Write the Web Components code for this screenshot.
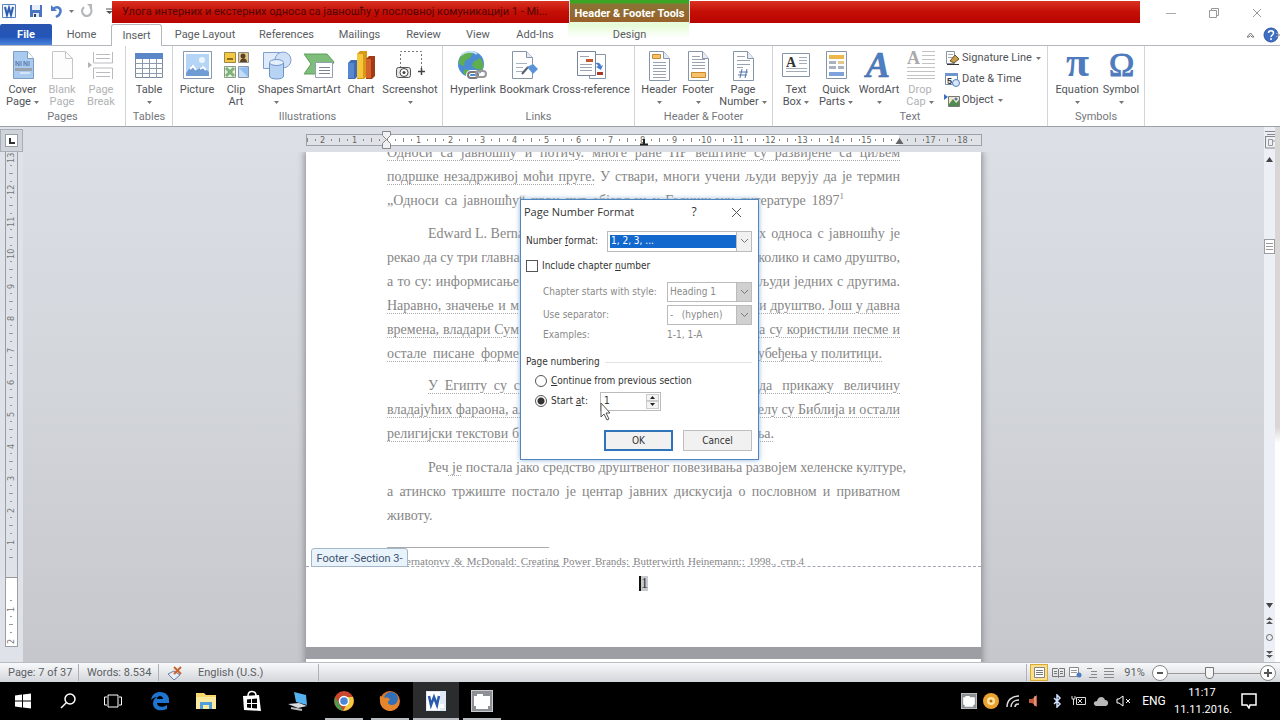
<!DOCTYPE html>
<html lang="en">
<head>
<meta charset="utf-8">
<title>Word - Page Number Format</title>
<style>
html,body{margin:0;height:100%}
body{--ui:Roboto,"Open Sans",sans-serif;--dlg:"DejaVu Sans Condensed","DejaVu Sans",sans-serif;--ink:#505358;--line:#b4b7bc;font:11px/12px var(--ui);color:var(--ink);background:#fff;overflow:hidden}
</style>
</head>
<body>
<word-app></word-app>
<script>
const svg=(w,h,b)=>`<svg width="${w}" height="${h}" viewBox="0 0 ${w} ${h}" fill="none" aria-hidden="true">${b}</svg>`;
const sheet='<path d="M6.500 1.500h14l6 7v22h-20z" fill="#fff" stroke="#8795a8"/><path d="M20.500 1.500v7h6" fill="#e4ebf5" stroke="#8795a8"/>';
const ICON={
cover:svg(32,32,'<path d="M6.500 1.500h14l6 7v20h-20z" fill="#a9cbef" stroke="#7d9cc0"/><path d="M20.500 1.500v7h6" fill="#fff" stroke="#7d9cc0"/><path d="M9 16v-5l3 5v-5M14 11v5M17 16v-5l3 5v-5M22 11v5" stroke="#5a7aa8"/><path d="M8 18h17v3H8z" fill="#9aa3ac"/><path d="M13 23h10" stroke="#fff"/>'),
blank:svg(32,32,'<path d="M6.500 1.500h13l7 7v20h-20z" fill="#fdfdfd" stroke="#c4c6c9"/><path d="M19.500 1.500v7h7" stroke="#c4c6c9"/>'),
brk:svg(32,32,'<path d="M8.500 2v11h19V2M8.500 29V18h19v11M11 4.500h14M11 8.500h14M11 22.500h14M11 26.500h14" stroke="#b9bbbe"/><path d="M3 12l4 3-4 3z" fill="#b0b2b5"/>'),
table:svg(32,32,'<path d="M2.500 3.500h27v24h-27z" fill="#fff" stroke="#7b8a9e"/><path d="M2 3h28v6H2z" fill="#5b87c8"/><path d="M2 13.500h28M2 18.500h28M2 23.500h28M9.500 9v19M16.500 9v19M23.500 9v19" stroke="#8d9aab"/>'),
picture:svg(32,32,'<path d="M2.500 1.500h28v27h-28z" fill="#fff" stroke="#8899b0"/><path d="M5 4h23v22H5z" fill="#b5d5f6"/><path d="M5 23l6-8 5 5 5-4 7 6v4H5z" fill="#6f9bd5"/><path d="M9 19l3-3 3 4M19 19l3-2 3 3" stroke="#fff" stroke-width="2"/><circle cx="21" cy="10" r="3" fill="#eef6fd"/>'),
clip:svg(32,32,'<path d="M4.500 2.500h11v10h-11z" fill="#f3c843" stroke="#9b8650"/><path d="M7 8h6v2H7z" fill="#8a6a20"/><path d="M18.500 2.500h10v10h-10z" fill="#e8c98b" stroke="#8b8b8b"/><circle cx="23" cy="6" r="2.500" fill="#5a4326"/><path d="M20 12c0-5 7-5 7 0z" fill="#5a4326"/><path d="M4.500 16.500h11v11h-11z" fill="#e5f0e0" stroke="#8b9b8b"/><path d="M6 18l8 8M14 18l-8 8" stroke="#7fb279" stroke-width="3"/><path d="M18.500 16.500h10v11h-10z" fill="#c4dcf7" stroke="#8796ad"/><path d="M19 18l9 9V17z" fill="#8fbdf0"/>'),
shapes:svg(32,32,'<path d="M3.500 2.500h17v16h-17z" fill="#dfeafa" stroke="#7f9fcf"/><circle cx="23" cy="10" r="8" fill="#cfe0f6" stroke="#7f9fcf"/><path d="M9.500 13v13c0 4 14 4 14 0V13" fill="#b7d3f3" stroke="#6d93c9"/><ellipse cx="16.500" cy="12.500" rx="7" ry="3" fill="#e4effb" stroke="#6d93c9"/>'),
smart:svg(32,32,'<path d="M1 4h23l7 8-7 12H1l7-10z" fill="#7fbd7b" stroke="#5f9e60"/><path d="M12.500 12.500h17v15h-17z" fill="#fff" stroke="#93a0b3"/><path d="M16 17.500h11M16 20.500h11M16 23.500h11" stroke="#7b8696"/>'),
chart:svg(32,32,'<path d="M3 13l3-3h6v17l-2 2H3z" fill="#3e6db5"/><path d="M3 13h6v15H3z" fill="#5787cf"/><path d="M12 4l3-3h7v25l-3 3h-7z" fill="#d69a16"/><path d="M12 4h6v24h-6z" fill="#f6c73c"/><path d="M21 9l3-3h6v20l-3 3h-6z" fill="#a33a16"/><path d="M21 9h5v19h-5z" fill="#d5612d"/>'),
shot:svg(32,32,'<path d="M6.500 18V1.500h21V18" stroke="#777" stroke-dasharray="2 2"/><path d="M24 21.500h7M27.500 18v7" stroke="#444" stroke-width="1.500"/><rect x="2.500" y="17.500" width="14" height="10" rx="2" fill="#e3e5e8" stroke="#555"/><circle cx="10" cy="22.500" r="4" fill="#fff" stroke="#444"/><circle cx="10" cy="22.500" r="1.500" fill="#444"/>'),
link:svg(32,32,'<circle cx="14" cy="14" r="13" fill="#4b8bd2"/><path d="M5 5c5-4 9-3 11-2l-3 5-5 3-1 5-5-2c-1-4 1-7 3-9zM16 12l7-4c4 4 4 9 2 12l-6-1-4-3zM8 19l5 2v6c-4-1-6-3-7-5z" fill="#5fae4f"/><path d="M4 5c5-4 12-4 16-1" stroke="#c2e0f6" stroke-width="2"/><rect x="11" y="22" width="10" height="6" rx="3" stroke="#fff" stroke-width="4"/><rect x="11" y="22" width="10" height="6" rx="3" stroke="#777" stroke-width="2"/><rect x="19" y="21" width="10" height="6" rx="3" stroke="#999" stroke-width="2"/>'),
bookmark:svg(32,32,'<path d="M3.500 1.500h14l6 6v21h-20z" fill="#fff" stroke="#8795a8"/><path d="M17.500 1.500v6h6" fill="#e4ebf5" stroke="#8795a8"/><path d="M7 13.500h11M7 17.500h7M7 21.500h7" stroke="#a9b3c0"/><path d="M13 24l6-7" stroke="#55606e" stroke-width="2"/><path d="M18 17l6-3 5 5-5 5z" fill="#5b93d8"/>'),
cross:svg(32,32,'<path d="M14.500 4.500h16v24h-16z" fill="#fff" stroke="#8795a8"/><path d="M22 22h6v3h-6z" fill="#a73a26"/><path d="M2.500 1.500h18v24h-18z" fill="#fff" stroke="#77859a"/><path d="M5 6.500h9M5 14.500h12M5 17.500h12M5 20.500h12" stroke="#9aa5b4"/><path d="M11 9h7v3h-7z" fill="#c5562f"/><path d="M21 13c4-1 5 2 5 3l2-1-2 5-5-3 2-1c0-1-1-2-2-2z" fill="#4a7fd0"/>'),
header:svg(32,32,sheet+'<path d="M9.500 4.500h8v4h-8z" fill="#f5c16a" stroke="#c98a2d"/><path d="M10 12.500h13M10 15.500h13M10 18.500h13M10 21.500h13M10 24.500h13M10 27.500h13" stroke="#99a3b0"/>'),
footer:svg(32,32,sheet+'<path d="M9.500 22.500h14v5h-14z" fill="#f5c16a" stroke="#c98a2d"/><path d="M10 6.500h8M10 9.500h13M10 12.500h13M10 15.500h13M10 18.500h13" stroke="#99a3b0"/>'),
pnum:svg(32,32,sheet+'<path d="M10 6.500h8M10 10.500h13M10 14.500h13M10 17.500h6" stroke="#99a3b0"/><path d="M15 19l-2 9M20 19l-2 9M12 22h9M11 25h9" stroke="#5276ae"/>'),
textbox:svg(32,32,'<path d="M2.500 3.500h27v23h-27z" fill="#fff" stroke="#8795a8"/><path d="M19 7.500h8M19 10.500h8M19 13.500h8M6 18.500h21M6 21.500h21" stroke="#a3adba"/><text x="6" y="17" font-family="Liberation Serif" font-size="14" font-weight="bold" fill="#333">A</text>'),
quick:svg(32,32,'<path d="M6.500 1.500h20v27h-20z" fill="#fff" stroke="#8795a8"/><path d="M9 5h15v4H9z" fill="#edb74a"/><path d="M9 11h7v3H9zM9 16h7v3H9zM18 16h6v3h-6z" fill="#a9b3c0"/><path d="M18 11h6v3h-6z" fill="#e5c78d"/><path d="M9 22h15v4H9z" fill="#7ea3dc"/>'),
wordart:svg(32,32,'<text x="3" y="27" font-family="Liberation Serif" font-size="36" font-style="italic" font-weight="bold" fill="#4d7fc4" stroke="#39609c" stroke-width=".5">A</text>'),
drop:svg(32,32,'<path d="M18 1.500h13M18 5.500h13M18 9.500h13M18 13.500h13M3 17.500h28M3 21.500h28M3 25.500h28M3 28.500h28" stroke="#c2c2c2"/><text x="3" y="14" font-family="Liberation Serif" font-size="18" font-weight="bold" fill="#aaa">A</text>'),
pi:svg(32,32,'<text x="5" y="26" font-family="Liberation Serif" font-size="42" font-weight="bold" fill="#4d7bbd">π</text>'),
omega:svg(32,32,'<text x="4" y="26" font-family="Liberation Serif" font-size="34" fill="#4d7bbd" stroke="#4d7bbd">Ω</text>'),
sig:svg(16,16,'<path d="M2.500 1.500h8v12h-8z" fill="#fff" stroke="#8a93a0"/><path d="M4 4.500h5M4 7.500h5" stroke="#aaa"/><path d="M6 11l5-6 4 4-5 4z" fill="#c79c4c" stroke="#6b5426"/><path d="M3 14.500h12" stroke="#333"/>'),
date:svg(16,16,'<path d="M1.500 2.500h12v11h-12z" fill="#fff" stroke="#6f8bb8"/><path d="M1 2h13v3H1z" fill="#6f95cf"/><text x="3" y="13" font-family="Liberation Sans" font-size="9" font-weight="bold" fill="#333">5</text><circle cx="12" cy="12" r="3.500" fill="#d7e6f8" stroke="#557fb8"/>'),
object:svg(16,16,'<path d="M0 2l4 3-4 3z" fill="#3c6fc4"/><path d="M4.500 4.500h11v10h-11z" fill="#f1e7c8" stroke="#777"/><path d="M5 12l4-5 3 4 3-3v6H5z" fill="#4f8a50"/><circle cx="12" cy="7" r="1.500" fill="#4a79c0"/>'),
word:svg(16,16,'<path d="M1.500 1.500h13v13h-13z" fill="#eef4fc" stroke="#5b83c2"/><path d="M4 4l2 8 2-7 2 7 2-8" stroke="#2c5cab" stroke-width="2"/>'),
save:svg(14,14,'<path d="M1 1h12v12H1z" fill="#4a74bf"/><path d="M3 1h8v5H3z" fill="#e8eefa"/><path d="M4 9h6v4H4z" fill="#e3e3ef"/><path d="M5 10h2v3H5z" fill="#345"/>'),
undo:svg(14,14,'<path d="M2 1v6h6z" fill="#4f7cc8"/><path d="M4 5c5-4 10 0 6 6l-3 2" stroke="#4f7cc8" stroke-width="2.500"/>'),
redo:svg(14,14,'<path d="M10 3c3 3 1 9-3 9S0 7 4 3" stroke="#b3b6ba" stroke-width="2"/><path d="M7 0h5v5z" fill="#b3b6ba"/>')
};
const arrow='<svg class="arr" width="5" height="3" viewBox="0 0 5 3" aria-hidden="true"><path d="M0 0h5L2.500 3z" fill="#777"/></svg>';
const RESET='*{box-sizing:border-box}button{font:inherit;color:inherit;background:none;border:0;padding:0;margin:0}svg{display:block;flex:none}';
function define(name,html,setup){
  const t=document.createElement('template');
  customElements.define(name,class extends HTMLElement{
    constructor(){super();this.attachShadow({mode:'open'})}
    connectedCallback(){
      t.innerHTML=typeof html==='function'?html(this):html;
      this.shadowRoot.replaceChildren(t.content.cloneNode(true));
      if(setup)setup(this);
    }
  });
}

define('title-bar',`<style>${RESET}
:host{display:flex;height:24px;position:relative;background:#fff}
.qat{display:flex;align-items:center;gap:6px;width:112px;padding:0 4px 2px 1px;justify-content:space-between}
.qat i{width:1px;height:12px;background:#b5b8bd}
.cap{flex:1;margin:1px 0;background:linear-gradient(#d93222,#c40e05 50%,#b80500);color:#520604;font-size:11px;line-height:22px;padding-left:10px;white-space:nowrap;display:flex}
.cap span{width:438px}
.ctx{width:121px;height:25px;margin:-1px 0 0 9px;background:linear-gradient(#3da526 0 3px,#8a7434 4px,#99612a 22px,#e8fbdc 22px);color:#fff;font-weight:700;text-align:center;line-height:28px;border:solid #d9d9d9;border-width:0 1px}
.win{width:140px;display:flex;align-items:center;padding:2px 0 0 26px;gap:33px}
</style>
<div class="qat">${ICON.word}<i></i>${ICON.save}${ICON.undo}${arrow}${ICON.redo}<i></i>
<svg width="7" height="7"><path d="M0 1h7" stroke="#555"/><path d="M0 3h7L3.500 6z" fill="#555"/></svg></div>
<div class="cap"><span>Улога интерних и екстерних односа са јавношћу у пословној комуникацији 1 - Mi...</span><div class="ctx">Header &amp; Footer Tools</div></div>
<div class="win">
<button aria-label="Minimize">${svg(10,10,'<path d="M0 5.500h10" stroke="#aaa"/>')}</button>
<button aria-label="Restore">${svg(10,10,'<path d="M.5 2.500h7v7h-7zM2.500 2.500v-2h7v7h-2" stroke="#999"/>')}</button>
<button aria-label="Close">${svg(10,10,'<path d="M1 1l8 8M9 1l-8 8" stroke="#999"/>')}</button></div>`);

define('ribbon-tabs',`<style>${RESET}
:host{display:flex;height:22px;align-items:stretch;border-bottom:1px solid var(--line);background:#fff;position:relative}
button{height:21px;line-height:21px;text-align:center;color:#5a5d62;flex:none}
.file{width:52px;background:linear-gradient(#2a55b0,#2355b8 60%,#4b84dd);color:#fff;font-weight:700;border-radius:2px 2px 0 0}
.on{border:1px solid var(--line);border-bottom:0;border-radius:3px 3px 0 0;background:#fff;height:22px;line-height:19px}
.design{background:linear-gradient(#e3fbd4,#fff 14px) 1px 0/121px 21px no-repeat}
.end{margin-left:auto;display:flex;align-items:center;gap:8px}
</style>
<button class="file">File</button><button style="width:59px">Home</button><button class="on" style="width:51px">Insert</button><button style="width:86px">Page Layout</button><button style="width:77px">References</button><button style="width:69px">Mailings</button><button style="width:59px">Review</button><button style="width:50px">View</button><button style="width:64px">Add-Ins</button><button class="design" style="width:125px">Design</button>
<div class="end">${svg(9,8,'<path d="M1 6l3.500-4L8 6H6L4.500 4.500 3 6z" stroke="#777"/>')}${svg(17,16,'<circle cx="8" cy="8" r="7" fill="#3f6fc4" stroke="#2d559f"/><path d="M5.500 6c0-3 5-3 5 0 0 2-2.500 2-2.500 4M8 11v2" stroke="#fff" stroke-width="1.500"/><path d="M13 6l4 2-4 2" stroke="#aaa"/>')}</div>`);

define('ribbon-group',h=>`<style>${RESET}
:host{display:flex;flex-direction:column;height:80px;border-right:1px solid #d3d5d9;flex:none}
.items{display:flex;flex:1;min-height:0;padding:4px 0 0 ${h.getAttribute('pad')||4}px}
.cap{text-align:center;line-height:14px;height:16px;color:#74777c}
</style><div class="items"><slot></slot></div><div class="cap">${h.getAttribute('label')}</div>`);

define('ribbon-button',h=>{const l=h.getAttribute('label').split('|'),a=h.hasAttribute('menu');
return `<style>${RESET}
:host{display:block;flex:none}
button{width:100%;display:flex;flex-direction:column;align-items:center;white-space:nowrap;line-height:12px}
:host([off]){color:#b0b2b5}
.ic{height:34px}
.l{display:flex;justify-content:center;align-items:center;gap:3px;height:12px}
</style><button><span class="ic">${ICON[h.getAttribute('icon')]}</span><span class="l">${l[0]}</span><span class="l">${l[1]||''}${a?arrow:''}</span></button>`});

define('ribbon-row',h=>`<style>${RESET}:host{display:block}button{display:flex;align-items:center;gap:2px;height:20px}.arr{margin-left:2px}</style>
<button>${ICON[h.getAttribute('icon')]}<slot></slot>${h.hasAttribute('menu')?arrow:''}</button>`);

const B=(icon,label,w,x='')=>`<ribbon-button icon="${icon}" label="${label}" style="width:${w}px" ${x}></ribbon-button>`;
define('office-ribbon',`<style>${RESET}
:host{display:flex;height:81px;border-bottom:1px solid #9ea2a8;background:#fff}
.col{margin:-2px 0 0 4px;display:flex;flex-direction:column;gap:1px;height:62px}
</style>
<ribbon-group label="Pages" pad="3" style="width:126px">${B('cover','Cover|Page',39,'menu')}${B('blank','Blank|Page',40,'off')}${B('brk','Page|Break',38,'off')}</ribbon-group>
<ribbon-group label="Tables" pad="3" style="width:47px">${B('table','Table',40,'menu')}</ribbon-group>
<ribbon-group label="Illustrations" pad="5" style="width:270px">${B('picture','Picture',38)}${B('clip','Clip|Art',40)}${B('shapes','Shapes',40,'menu')}${B('smart','SmartArt',45)}${B('chart','Chart',40)}${B('shot','Screenshot',58,'menu')}</ribbon-group>
<ribbon-group label="Links" pad="5" style="width:192px">${B('link','Hyperlink',50)}${B('bookmark','Bookmark',53)}${B('cross','Cross-reference',80)}</ribbon-group>
<ribbon-group label="Header &amp; Footer" pad="5" style="width:138px">${B('header','Header',38,'menu')}${B('footer','Footer',40,'menu')}${B('pnum','Page|Number',50,'menu')}</ribbon-group>
<ribbon-group label="Text" pad="5" style="width:275px">${B('textbox','Text|Box',36,'menu')}${B('quick','Quick|Parts',44,'menu')}${B('wordart','WordArt',42,'menu')}${B('drop','Drop|Cap',40,'off menu')}<div class="col"><ribbon-row icon="sig" menu>Signature Line</ribbon-row><ribbon-row icon="date">Date &amp; Time</ribbon-row><ribbon-row icon="object" menu>Object</ribbon-row></div></ribbon-group>
<ribbon-group label="Symbols" pad="5" style="width:97px">${B('pi','Equation',48,'menu')}${B('omega','Symbol',40,'menu')}</ribbon-group>`);

define('h-ruler',`<style>${RESET}
:host{display:flex;width:676px;height:12px;border:1px solid #9da1a8;background:#dfe2e7;position:relative;font:9px/10px var(--dlg);color:#666}
span{width:32px;flex:none;text-align:center;background:linear-gradient(#888,#888) 0 3px/1px 4px no-repeat,linear-gradient(#888,#888) 8px 4px/1px 2px no-repeat,linear-gradient(#888,#888) 24px 4px/1px 2px no-repeat}
.in{display:flex;background:#fff;width:512px;flex:none;margin-left:-16px}
.a{display:flex;flex:none;width:96px}
.b{display:flex}
svg{position:absolute;top:-4px}
</style><div class="a"><span>2</span><span>1</span><span></span></div><div class="in"></div><div class="b"></div>
<svg style="left:75px" width="10" height="20"><path d="M.5.500h8v4l-4 4-4-4zM.5 12.500l4-4 4 4v5h-8z" fill="#f0f1f3" stroke="#888"/></svg>
<svg style="left:588px" width="10" height="16"><path d="M4.500 7l4 6h-8z" fill="#666"/></svg>
<svg style="left:333px" width="9" height="16"><path d="M4 8v5M0 13.500h8" stroke="#222" stroke-width="2"/></svg>`,h=>{
 const s=h.shadowRoot,i=s.querySelector('.in'),b=s.querySelector('.b');
 i.innerHTML='<span style="width:16px"></span>'+Array.from({length:15},(_,k)=>`<span>${k+1}</span>`).join('')+'<span style="width:16px"></span>';
 b.innerHTML='<span style="width:16px"></span><span>17</span><span>18</span>';
});

define('v-ruler',`<style>${RESET}
:host{display:flex;flex-direction:column;width:23px;flex:none;background:#dfe3e9;font:9px/12px var(--dlg);color:#777}
.tab{height:23px;margin-top:2px;border:1px solid #a9adb5;display:grid;place-items:center;background:#cfd3da;flex:none}
.tab b{width:13px;height:13px;background:#fff;border:1px solid #9a9ea6;display:grid;place-items:center}
.bar{margin-left:5px;width:13px;border:1px solid #9a9ea6;border-width:0 1px 1px;display:flex;flex-direction:column;height:495px;flex:none;overflow:hidden}
.bar span{display:block;writing-mode:vertical-rl;transform:rotate(180deg);height:32px;flex:none;text-align:center;background:linear-gradient(#999,#999) 4px 0/4px 1px no-repeat,linear-gradient(#999,#999) 5px 8px/2px 1px no-repeat,linear-gradient(#999,#999) 5px 24px/2px 1px no-repeat;line-height:11px}
.w{background:#fff;border-top:1px solid #999;flex:1;overflow:hidden;display:flex;flex-direction:column;padding-top:15px}
.g{margin-top:-10px}
.g .last{height:19px}
</style><div class="tab"><b><svg width="6" height="6"><path d="M1 0v5h5" fill="none" stroke="#333" stroke-width="2"/></svg></b></div><div class="bar"><div class="g"></div><div class="w"><span>1</span><span>2</span></div></div>`,h=>{
 let o='';for(let k=13;k>0;k--)o+=`<span>${k}</span>`;
 h.shadowRoot.querySelector('.g').innerHTML=o+'<span class="last"></span>';
});

define('doc-line',`<style>${RESET}
:host{display:flex;justify-content:space-between;line-height:24px;height:24px;white-space:nowrap}
:host([indent]){padding-left:41px}
:host([split]) .s{width:132px}:host([split][indent]) .s{width:92px}
.s{flex:1;min-width:0;text-align:justify;text-align-last:justify}
:host([split]) .s{flex:none}
.e{width:141px;display:flex;justify-content:flex-end}
.e ::slotted(*){flex:1 0 auto;text-align-last:justify}
:host(:not([split])) .e{display:none}
:host([last]) .s{text-align-last:left}
</style><div class="s"><slot></slot></div><div class="e"><slot name="end"></slot></div>`);

define('doc-page',`<style>${RESET}
:host{display:block;width:675px;height:495px;background:#fff;flex:none;position:relative;overflow:hidden;padding:0 81px;font:14px/24px "Liberation Serif",serif;color:#868686}
.p{display:grid;grid-template-columns:minmax(0,1fr);align-content:space-between;margin-bottom:11px}
.p3{height:71px}.p6{height:141px}
.first{margin-top:-11px;height:70px}
.short{padding-right:56px}
u{text-decoration:underline dotted #a9a9a9 1px;text-underline-offset:3px}
.rule{width:162px;height:1px;background:#aaa;margin:20px 0 0}
.note{font-size:11px;line-height:18px;margin:4px 0 0 19px;width:398px;white-space:nowrap;text-align-last:justify}
.foot{margin:-4px -81px 0;border-top:1px dashed #a3a5b3;text-align:center;color:#333;padding-top:9px;line-height:16px}
.foot span{background:#c8cacd;border-left:2px solid #111}
.tag{position:absolute;left:5px;top:396px;width:97px;height:19px;border:1px solid #a5b6cb;border-radius:3px 3px 0 0;background:#e9f3fc;font:11px/20px var(--ui);color:#3f5371;text-align:center}
sup{font-size:9px;line-height:0}
</style>
<div class="p first"><doc-line><u>Односи са јавношћу и потичу. многе ране ПР вештине су развијене са циљем</u></doc-line>
<doc-line><u>подршке незадрживој моћи пруге.</u> У ствари, многи учени људи верују да је термин</doc-line>
<doc-line class="short">„Односи са јавношћу“ први пут објављен у Годишњаку литературе 1897<sup>1</sup></doc-line></div>
<div class="p p6"><doc-line split indent>Edward L. Berna<span slot="end">х односа с јавношћу је</span></doc-line>
<doc-line split>рекао да су три главна<span slot="end">колико и само друштво,</span></doc-line>
<doc-line split>а то су: информисање<span slot="end">људи једних с другима.</span></doc-line>
<doc-line split><u>Наравно, значење и м</u><span slot="end"><u>и друштво.</u> <u>Још у давна</u></span></doc-line>
<doc-line split><u>времена, владари Сум</u><span slot="end"><u>а су користили песме и</u></span></doc-line>
<doc-line split><u>остале писане форме</u><span slot="end" style="margin-right:18px"><u>убеђења у политици.</u></span></doc-line></div>
<div class="p p3"><doc-line split indent><u>У Египту су с</u><span slot="end"><u>да прикажу величину</u></span></doc-line>
<doc-line split><u>владајућих фараона, ал</u><span slot="end"><u>делу су Библија и остали</u></span></doc-line>
<doc-line split><u>религијски текстови б</u><span slot="end" style="margin-right:126px"><u>ња.</u></span></doc-line></div>
<div class="p p3"><doc-line indent>Реч<u> је</u> постала јако средство друштвеног повезивања развојем хеленске културе,</doc-line>
<doc-line>а атинско тржиште постало је центар јавних дискусија о пословном и приватном</doc-line>
<doc-line last>животу.</doc-line></div>
<div class="rule"></div>
<div class="note">ernatonvy &amp; McDonald: Creating Power Brands: Butterwirth Heinemann:: 1998., стр.4</div>
<div class="foot"><span>1</span></div><div class="tag">Footer -Section 3-</div>`);

const chev=svg(9,6,'<path d="M1 1l3.500 3.500L8 1" stroke="#777"/>');
define('page-number-dialog',`<style>${RESET}
:host{display:block;position:absolute;left:50%;margin-left:-120px;top:72px;width:239px;height:261px;background:#fff;border:1px solid #4f86bd;box-shadow:0 0 5px #8fb2d8;font:10px/16px var(--dlg);color:#333;padding:0 6px 0 5px;white-space:nowrap}
.row{display:flex;align-items:center}
.t{height:24px;font-family:"Open Sans",sans-serif;font-size:11px;margin-left:-2px}
.t span{flex:1}.t button{width:14px;display:grid;place-items:center;margin-right:28px;font-size:12px}.t button:last-child{margin-right:9px}
.sel{position:relative;margin-left:auto;width:145px;height:21px}
.sel.sm{width:85px;height:20px;color:#8a8a8a}
select{appearance:none;width:100%;height:100%;border:1px solid #bbb;border-radius:0;font:inherit;color:inherit;margin:0;padding:0 2px;background:#fff;opacity:1;outline:0}
.sel i{position:absolute;right:0;top:0;bottom:0;width:16px;border:1px solid #bbb;display:grid;place-items:center;background:#f1f1f1;pointer-events:none}
.sm i{background:#d0d0d0}
.main select{color:#fff;background:linear-gradient(#1268cc,#1268cc) 2px 3px/126px 13px no-repeat,#fff;padding-left:3px}
.dim{color:#8a8a8a;padding-left:17px}
input[type=checkbox],input[type=radio]{appearance:none;width:12px;height:12px;margin:0 4px 0 0;border:1px solid #555;background:#fff}
input[type=radio]{border-radius:50%;margin-left:9px}
input[type=radio]:checked{background:radial-gradient(#333 0 3px,#fff 4px)}
label u{text-underline-offset:1px}
.h i{flex:1;height:1px;background:#e2e2e2;margin-left:5px}
.spin{display:flex;width:61px;height:19px;border:1px solid #bbb;margin-left:12px}
.spin input{border:0;width:44px;padding:0 0 0 3px;font:inherit;color:inherit;outline:0;background:none}
.spin div{width:15px;display:flex;flex-direction:column;margin:1px}
.spin button{flex:1;border:1px solid #ccc;background:#f3f3f3;display:grid;place-items:center;min-height:0}
.btns{justify-content:flex-end;gap:10px;margin-top:19px}
.btns button{width:69px;height:21px;border:1px solid #bfbfbf;background:#f1f1f1;line-height:18px}
.btns .ok{border:2px solid #2f74b8;line-height:16px}
.cur{position:absolute;left:79px;top:202px}
</style>
<div class="row t"><span>Page Number Format</span><button aria-label="Help">?</button><button aria-label="Close">${svg(11,11,'<path d="M1 1l9 9M10 1l-9 9" stroke="#555"/>')}</button></div>
<div class="row" style="height:34px"><label for="nf">Number <u>f</u>ormat:</label><div class="sel main"><select id="nf"><option>1, 2, 3, ...</option></select><i>${chev}</i></div></div>
<div class="row" style="height:16px"><input type="checkbox" id="ic"><label for="ic">Include chapter <u>n</u>umber</label></div>
<div class="row dim" style="height:24px;margin-top:6px"><label for="cs">Chapter starts with style:</label><div class="sel sm"><select id="cs" disabled><option>Heading 1</option></select><i>${chev}</i></div></div>
<div class="row dim" style="height:22px"><label for="us">Use separator:</label><div class="sel sm"><select id="us" disabled><option>-&nbsp;&nbsp; (hyphen)</option></select><i>${chev}</i></div></div>
<div class="row dim" style="height:18px"><span>Examples:</span><span style="margin-left:auto;width:85px">1-1, 1-A</span></div>
<div class="row h" style="height:16px;margin-top:10px"><span>Page numbering</span><i></i></div>
<div class="row" style="height:18px;margin-top:2px"><input type="radio" name="n" id="r1"><label for="r1"><u>C</u>ontinue from previous section</label></div>
<div class="row" style="height:20px;margin-top:1px"><input type="radio" name="n" id="r2" checked><label for="r2">Start <u>a</u>t:</label><div class="spin"><input type="text" value="1" aria-label="Start at"><div><button aria-label="Up">${svg(5,3,'<path d="M0 3h5L2.500 0z" fill="#222"/>')}</button><button aria-label="Down">${svg(5,3,'<path d="M0 0h5L2.500 3z" fill="#222"/>')}</button></div></div></div>
<div class="row btns"><button class="ok">OK</button><button>Cancel</button></div>
<svg class="cur" width="12" height="19"><path d="M1 1v14l3-3 3 6 2-1-3-6h4z" fill="#fff" stroke="#555"/></svg>`);

define('scroll-bar',`<style>${RESET}
:host{display:flex;flex-direction:column;align-items:center;width:11px;flex:none;background:#eceff5;overflow:hidden}
.thumb{width:11px;height:15px;border:1px solid #9a9da3;background:#fff;margin-top:77px;display:grid;place-items:center;flex:none}
.end{margin-top:auto;display:flex;flex-direction:column;gap:9px;padding-bottom:4px;align-items:center}
</style>${svg(11,22,'<path d="M1 4.500h10M3 7.500h8M1 9.500h10M1.500 9v12h10" stroke="#888"/><path d="M4.500 12.500h4v6h-4zM8 14h3" stroke="#999"/>')}
<svg width="7" height="5" style="margin-top:8px"><path d="M0 5h7L3.500 0z" fill="#444"/></svg>
<div class="thumb">${svg(7,7,'<path d="M0 .5h7M0 3.500h7M0 6.500h7" stroke="#999"/>')}</div>
<div class="end">${svg(7,5,'<path d="M0 0h7L3.500 5z" fill="#444"/>')}${svg(7,8,'<path d="M3.500 0L7 3H0zM3.500 4L7 7H0z" fill="#555"/>')}${svg(7,7,'<circle cx="3.500" cy="3.500" r="3" stroke="#666"/>')}${svg(7,8,'<path d="M3.500 4L7 1H0zM3.500 8L7 5H0z" fill="#555"/>')}</div>`);

define('work-space',`<style>${RESET}
:host{display:flex;flex:1;min-height:0;position:relative;overflow:hidden;background:linear-gradient(#dcdfe5,#d2d5da 50%,#c5c7cd)}
.main{flex:1;min-width:0;display:flex;flex-direction:column;align-items:center}
.r{height:25px;padding:7px 0 0;flex:none}
.pages{display:flex;flex-direction:column;gap:12px;background:#9c9ea3;box-shadow:0 0 7px 1px #85878c;clip-path:inset(0 -12px)}
.next{height:20px;background:#fff}
.edge{width:5px;background:linear-gradient(#d9d7d5 0 300px,#fff 316px);flex:none}
</style><v-ruler></v-ruler><div class="main"><div class="r"><h-ruler></h-ruler></div><div class="pages"><doc-page></doc-page><div class="next"></div></div></div><scroll-bar></scroll-bar><div class="edge"></div><page-number-dialog></page-number-dialog>`);

define('status-bar',`<style>${RESET}
:host{display:flex;height:20px;flex:none;align-items:center;background:linear-gradient(#f8f9fa,#d3d6db);border-top:1px solid #b9bcc2;color:#5c5f64}
.c{height:17px;line-height:16px;border-right:1px solid #adb1b7;padding-left:8px;flex:none;display:flex;align-items:center}
.v{display:flex;margin-left:auto;align-items:center;border-left:1px solid #adb1b7;padding-left:3px;height:17px;gap:4px}
.v .on{background:#fbe08b;border:1px solid #d9a935;width:18px;height:17px;display:grid;place-items:center}
.z{width:16px;height:16px;border:1px solid #888;border-radius:50%;background:#fff;display:grid;place-items:center}
input{appearance:none;width:92px;height:16px;margin:0;background:linear-gradient(#999,#999) 0 8px/100% 1px no-repeat}
input::-webkit-slider-thumb{appearance:none;width:9px;height:12px;background:#f5f5f5;border:1px solid #777;border-radius:1px 1px 5px 5px}
.zoom{display:flex;align-items:center;margin-left:3px;padding-right:4px}
.zoom span{width:31px;text-align:center;margin-right:2px}
</style><div class="c" style="width:79px">Page: 7 of 37</div><div class="c" style="width:80px">Words: 8.534</div>
<div class="c" style="width:160px"><svg width="16" height="16" viewBox="0 0 16 16" fill="none"><path d="M1 9l6-3 6 4-6 5z" fill="#e7edf6" stroke="#6880a4"/><path d="M7 2l7 7M14 2L7 9" stroke="#c8642e" stroke-width="2"/></svg><span style="margin-left:15px">English (U.S.)</span></div>
<div class="v"><span class="on">${svg(11,11,'<path d="M.5.500h10v10H.5z" fill="#fff" stroke="#888"/><path d="M2 3.500h7M2 5.500h7M2 7.500h7" stroke="#777"/>')}</span>
${svg(13,11,'<path d="M.5 1.500h5l1 1 1-1h5v8h-5l-1 1-1-1h-5zM6.500 2v8M2 4.500h3M2 6.500h3M8 4.500h3M8 6.500h3" stroke="#777"/>')}${svg(13,11,'<path d="M.5.500h9v9h-9z" fill="#fff" stroke="#888"/><path d="M2 3.500h6M2 5.500h6" stroke="#999"/><circle cx="10" cy="8" r="2.500" fill="#4c7cc0"/>')}${svg(13,11,'<path d="M1 1.500h5M5 4.500h6M5 7.500h6M3 10.500h8" stroke="#888"/>')}${svg(13,11,'<path d="M1 1.500h10M1 4.500h10M1 7.500h10M1 10.500h10" stroke="#888"/>')}</div>
<div class="zoom"><span>91%</span><button class="z" aria-label="Zoom out">${svg(8,8,'<path d="M1 4h6" stroke="#555" stroke-width="2"/>')}</button><input type="range" aria-label="Zoom" min="0" max="100" value="45"><button class="z" aria-label="Zoom in">${svg(8,8,'<path d="M0 4h8M4 0v8" stroke="#555" stroke-width="2"/>')}</button></div>`);

const cam=s=>`<svg width="${s}" height="${s}" viewBox="0 0 22 22"><path d="M0 0h22v22H0z" fill="#c9cbce"/><path d="M1 1h20v20H1z" fill="#8d9094"/><path d="M3 6h3V4h6v2h7v10h-2v3H5v-3H3z" fill="#fff"/></svg>`;
define('task-bar',`<style>${RESET}
:host{display:flex;height:38px;flex:none;background:#000;color:#fff;align-items:stretch}
button{width:46px;display:grid;place-items:center;flex:none}
.n{width:45px}.run{background:linear-gradient(#b9bcc0,#b9bcc0) center bottom/38px 2px no-repeat}.run.on{background:linear-gradient(#b9bcc0,#b9bcc0) center bottom/46px 2px no-repeat,#2b2c2e}
.tray{margin-left:auto;display:flex;align-items:center;padding-right:12px}
.tray>span{flex:none}.i{width:22px;display:grid;place-items:center}
.lang{width:40px;text-align:center;font-size:12px}.clock{width:56px;text-align:center;line-height:17px;white-space:nowrap}.note{width:38px;display:grid;place-items:center}
</style>
<button class="n" aria-label="Start">${svg(16,16,'<path d="M0 2.500l7-1v6H0zM8 1.500l8-1v7H8zM0 8.500h7v6l-7-1zM8 8.500h8v7l-8-1z" fill="#fff"/>')}</button>
<button class="n" aria-label="Search">${svg(16,16,'<circle cx="10" cy="6" r="5" stroke="#fff" stroke-width="1.500"/><path d="M6.500 9.500L1 15" stroke="#fff" stroke-width="1.500"/>')}</button>
<button class="n" aria-label="Task view">${svg(18,14,'<path d="M4 1h10v12H4zM3 3H.5v8H3M15 3h2.500v8H15" stroke="#fff"/>')}</button>
<button style="margin-left:2px" aria-label="Edge">${svg(20,20,'<path d="M1 9C2 3 6 1 10 1c6 0 9 4 9 8v3H7c0 4 6 5 10 2v4c-7 3-14 1-14-6 0-3 2-5 4-6-3 0-5 2-6 3zm6-1h6c0-4-6-4-6 0z" fill="#1f74cf"/>')}</button>
<button aria-label="Explorer">${svg(22,20,'<path d="M1 2h8l2 2h10v14H1z" fill="#f5d76e"/><path d="M1 6h20v12H1z" fill="#fbe9a0"/><path d="M5 18v-7h12v7h-3v-4H8v4z" fill="#4f9fd8"/>')}</button>
<button aria-label="Store">${svg(22,22,'<path d="M7 6c0-6 8-6 8 0" stroke="#fff" stroke-width="1.500"/><path d="M2 6l16-1 2 16-17-1z" fill="#fff"/><path d="M6 9.500l4-.5v4H6zM11 9l5-.5V13h-5zM6 14h4v4l-4-.5zM11 14h5v4.500l-5-.5z" fill="#000"/>')}</button>
<button aria-label="This PC">${svg(22,20,'<path d="M7 1l12 3 1 10-11-3z" fill="#55b2ee"/><path d="M1 13l11-1 8 3-9 2z" fill="#d9dcdf"/><path d="M4 17l11 2" stroke="#bbb" stroke-width="2"/>')}</button>
<button class="run" aria-label="Chrome">${svg(20,20,'<circle cx="10" cy="10" r="10" fill="#c9462f"/><path d="M1 6l6 10 2 4C3 19-1 13 1 6z" fill="#4a9c4e"/><path d="M10 6h9c3 8-4 14-10 14l5-9z" fill="#f3cb3f"/><circle cx="10" cy="10" r="4.500" fill="#4a86d8" stroke="#fff" stroke-width="1.500"/>')}</button>
<button class="run" aria-label="Firefox">${svg(22,20,'<circle cx="11" cy="10" r="10" fill="#e0732a"/><circle cx="12" cy="8" r="7" fill="#2f70b8"/><path d="M1 5l5 2c3-1 4 0 5 2-3 1-3 5 2 5 4 0 6-3 6-7 4 8-3 13-8 13C3 20 0 12 1 5z" fill="#e5862f"/>')}</button>
<button class="run on" aria-label="Word">${svg(22,20,'<path d="M1 0h20v20H1z" fill="#dfe9f6"/><path d="M2 1h13v18H2z" fill="#fff"/><path d="M4 5l2 9 3-8 3 8 2-9" stroke="#2b5bab" stroke-width="2.500"/><path d="M15 13h4v4h-4z" fill="#fff"/>')}</button>
<button class="run" aria-label="Camera">${cam(22)}</button>
<div class="tray"><span class="i">${cam(16)}</span>
<span class="i">${svg(16,16,'<circle cx="8" cy="8" r="8" fill="#e9a22f"/><circle cx="8" cy="8" r="4" fill="#fbe2a0"/><circle cx="8" cy="8" r="1.500" fill="#b06b10"/>')}</span>
<span class="i">${svg(14,14,'<path d="M1 13C1 6 6 2 13 2M5 13c0-4 3-7 8-7M9 13c0-2 1-3 4-3" stroke="#ddd" stroke-width="1.500"/>')}</span>
<span class="i">${svg(14,14,'<path d="M1 5h3l5-4v12L4 9H1z" fill="#c75a3c"/><path d="M7 2v10" stroke="#f5d0c0"/>')}</span>
<span class="i">${svg(12,14,'<path d="M3 4l6 6-3 3V1l3 3-6 6" stroke="#cfe3ff" stroke-width="1.500"/>')}</span>
<span class="i">${svg(16,12,'<path d="M5.500 2.500h9v7h-9zM7 4l4 4M11 4L7 8M1 1v3h3V1M2.500 4v6" stroke="#ddd"/>')}</span>
<span class="i">${svg(16,12,'<path d="M3 11c-3-1-3-5 1-5 1-5 7-5 8-1 4 0 4 5 1 6z" fill="#b9b9b9"/>')}</span>
<span class="i">${svg(15,12,'<path d="M1 4h2l4-3v10L3 8H1zM10 4l4 4M14 4l-4 4" stroke="#fff"/>')}</span>
<span class="lang">ENG</span><span class="clock">11:17<br>11.11.2016.</span>
<span class="note">${svg(16,16,'<path d="M1 1h14v11H9l-1 3-2-3H1z" stroke="#fff" stroke-width="1.500"/>')}</span></div>`);

define('word-app',`<style>*{box-sizing:border-box;flex-shrink:0}:host{display:flex;flex-direction:column;height:100vh}work-space{flex-shrink:1}</style>
<title-bar></title-bar><ribbon-tabs></ribbon-tabs><office-ribbon></office-ribbon><work-space></work-space><status-bar></status-bar><task-bar></task-bar>`);
</script>
</body>
</html>
